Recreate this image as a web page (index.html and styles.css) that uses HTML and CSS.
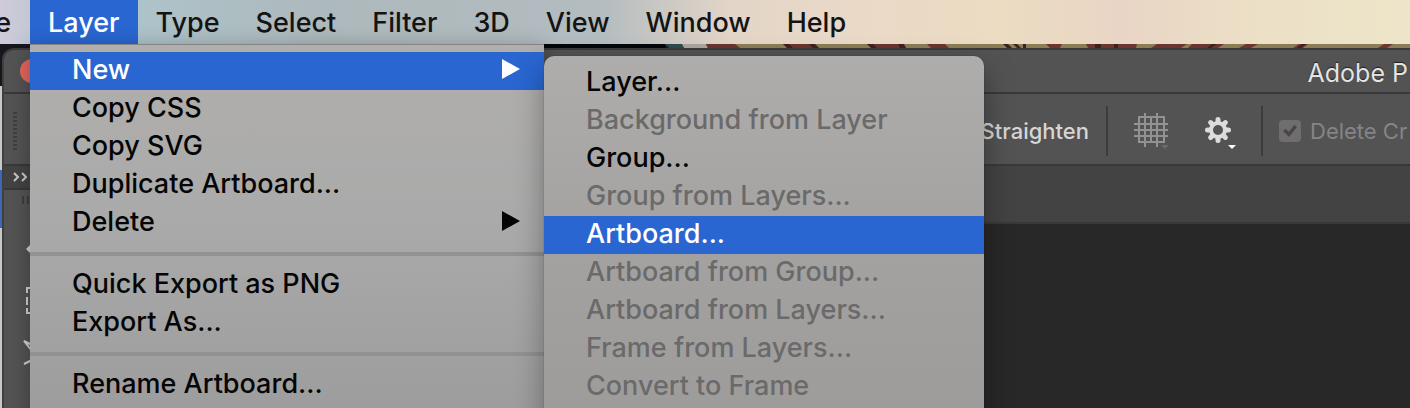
FILE: index.html
```
<!DOCTYPE html>
<html lang="en">
<head>
  <meta charset="UTF-8">
  <meta name="viewport" content="width=device-width, initial-scale=1.0">
  <title>Layer menu</title>
  <link rel="stylesheet" href="styles.css">
</head>
<body>

  <nav class="menubar">
    <button class="cut">e</button>
    <button class="active">Layer</button>
    <button>Type</button>
    <button>Select</button>
    <button>Filter</button>
    <button>3D</button>
    <button>View</button>
    <button>Window</button>
    <button>Help</button>
  </nav>

  <!-- wallpaper between menu bar and window -->
  <svg class="wallpaper" viewBox="0 0 1410 4" preserveAspectRatio="none" aria-hidden="true">
    <rect width="1410" height="4" fill="#15171c"/>
    <rect x="544" width="121" height="4" fill="#05080b"/>
    <path d="M665 0h20l-2 4h-14z" fill="#2f4a50"/>
    <path d="M682 0h24l2 4h-24z" fill="#aaa6a0"/>
    <path d="M706 0h704v4h-702z" fill="#8c7d55"/>
    <path d="M706 0h29l5 4h-32zM783 0h31l4 4h-28zM867 0h35l4 4h-33zM927 0h18l4 4h-18zM1046 0h16l-2 4h-10zM1086 0h51l-1 4h-48zM1157 0h30l-6 4h-30zM1192 0h32l-6 4h-30zM1246 0h12l-7 4h-12zM1299 0h9l-5 4h-10zM1384 0h9l-6 4h-9z" fill="#6c352f"/>
    <path d="M783 0h6l4 4h-6zM809 0h6l4 4h-6zM867 0h6l4 4h-6zM898 0h6l2 4h-6zM1003 0h5l4 4h-5zM1013 0h4l4 4h-4zM1023 0h3v4h-3zM1095 0h6v4h-6zM1114 0h4v4h-4zM1212 0h5l-6 4h-4zM1302 0h4l-5 4h-4z" fill="#3f2020"/>
  </svg>

  <div class="desktop">
    <div class="behind"><span></span></div>
    <main class="window">
      <header class="titlebar">
        <button class="close" aria-label="Close"></button>
        <h1>Adobe P</h1>
      </header>

      <div class="options">
        <span class="grip"></span>
        <button class="straighten">Straighten</button>
        <span class="divider"></span>
        <button class="icon" aria-label="Overlay options">
          <svg width="36" height="38" viewBox="0 0 36 38">
            <path d="M5 5h25v25H5zM0 12h34M0 18h34M0 24h34M11 1v34M17 5v25M23 1v34" fill="none" stroke="#929292" stroke-width="2"/>
            <path d="M27 33h8l-4 4z" fill="#6b6b6b"/>
          </svg>
        </button>
        <button class="icon gear" aria-label="Crop options">
          <svg width="32" height="34" viewBox="0 0 32 34">
            <g stroke="#dcdcdc" stroke-width="5" stroke-linecap="round">
              <path d="M13 2.500v21M2.500 13h21M5.600 5.600l14.800 14.800M20.400 5.600L5.600 20.400"/>
            </g>
            <circle cx="13" cy="13" r="9" fill="#dcdcdc"/>
            <circle cx="13" cy="13" r="5" fill="#535353"/>
            <path d="M23 28h8l-4 4z" fill="#fff"/>
          </svg>
        </button>
        <span class="divider"></span>
        <label class="check"><input type="checkbox" checked disabled><span>Delete Cr</span></label>
      </div>

      <div class="workspace">
        <aside class="tools">
          <div class="expand">
            <svg width="14" height="10" viewBox="0 0 14 10"><path d="M1 1l4 4-4 4M9 1l4 4-4 4" fill="none" stroke="#c8c8c8" stroke-width="2"/></svg>
          </div>
          <svg class="toolset" width="32" height="178" viewBox="0 0 32 178" fill="none" stroke="#d0d0d0" stroke-width="2">
            <path d="M19 6v8M24 6v8" stroke="#3c3c3c"/>
            <path d="M22 59l6-6v12z" fill="#d0d0d0" stroke="none"/>
            <path d="M30 98h-7v5M23 107v8M23 118v5h7"/>
            <path d="M28 161l-8-10 10 5M20 174l8-4"/>
          </svg>
        </aside>
        <section class="document">
          <div class="tabs"></div>
          <div class="canvas"></div>
        </section>
      </div>
    </main>
  </div>

  <ul class="menu main">
    <li><button class="active">New <svg width="18" height="20" viewBox="0 0 18 20"><path d="M0 0l18 10L0 20z"/></svg></button></li>
    <li><button>Copy CSS</button></li>
    <li><button>Copy SVG</button></li>
    <li><button>Duplicate Artboard...</button></li>
    <li><button>Delete <svg width="18" height="20" viewBox="0 0 18 20"><path d="M0 0l18 10L0 20z"/></svg></button></li>
    <li class="sep"></li>
    <li><button>Quick Export as PNG</button></li>
    <li><button>Export As...</button></li>
    <li class="sep"></li>
    <li><button>Rename Artboard...</button></li>
  </ul>

  <ul class="menu sub">
    <li><button>Layer...</button></li>
    <li><button disabled>Background from Layer</button></li>
    <li><button>Group...</button></li>
    <li><button disabled>Group from Layers...</button></li>
    <li><button class="active">Artboard...</button></li>
    <li><button disabled>Artboard from Group...</button></li>
    <li><button disabled>Artboard from Layers...</button></li>
    <li><button disabled>Frame from Layers...</button></li>
    <li><button disabled>Convert to Frame</button></li>
  </ul>

</body>
</html>
```
FILE: styles.css
```
* {
  margin: 0;
  padding: 0;
  box-sizing: border-box;
}

body {
  height: 100vh;
  display: flex;
  flex-direction: column;
  overflow: hidden;
  position: relative;
  background: #15171c;
  font-family: Inter, sans-serif;
}

button {
  border: none;
  background: none;
  font: inherit;
  color: inherit;
}

svg {
  display: block;
}

.menubar {
  display: flex;
  flex: none;
  height: 44px;
  font-size: 27px;
  font-weight: 450;
  color: #141414;
  background: linear-gradient(to right, #cfcbda 0, #c4c8d4 30px, #adc3ca 140px, #adb9bc 320px, #b3bcc0 600px, #e3d5c7 730px, #e9d9c7 850px, #ecdcc2 1000px, #e9d5c5 1120px, #ece0c6 1260px, #ede5c9 1400px);
}

.menubar button {
  padding: 0 18px;
}

.menubar .cut {
  width: 30px;
  padding: 0 19px 0 0;
  display: flex;
  align-items: center;
  justify-content: flex-end;
  overflow: hidden;
}

.menubar .active,
.menu .active {
  background: #2966d1;
  color: #fff;
}

.wallpaper {
  flex: none;
  width: 100%;
  height: 4px;
}

.desktop {
  flex: 1;
  display: flex;
  min-height: 0;
}

.behind {
  width: 2px;
  padding-top: 122px;
  background: linear-gradient(#15171c 38px, #c8c8c8 38px);
}

.behind span {
  display: block;
  height: 58px;
  background: #3b68b8;
}

.window {
  flex: 1;
  min-width: 0;
  display: flex;
  flex-direction: column;
  overflow: hidden;
  border-top: 2px solid #3a3a3a;
  border-left: 2px solid #3f3f3f;
  border-top-left-radius: 12px;
  background: #535353;
}

.titlebar {
  flex: none;
  display: flex;
  align-items: center;
  justify-content: space-between;
  height: 44px;
  padding: 4px 2px 0 16px;
  border-bottom: 2px solid #393939;
}

.close {
  width: 24px;
  height: 24px;
  margin-bottom: 4px;
  border-radius: 50%;
  background: #e3665b;
}

.titlebar h1 {
  font-size: 25px;
  font-weight: 400;
  color: #e4e4e4;
  text-shadow: 0 -1px 1px #222;
}

.options {
  flex: none;
  display: flex;
  align-items: center;
  height: 72px;
  padding-top: 4px;
  border-bottom: 2px solid #393939;
  font-size: 22px;
  font-weight: 450;
  color: #d6d6d6;
}

.grip {
  width: 4px;
  height: 38px;
  margin-left: 9px;
  margin-right: auto;
  background: repeating-linear-gradient(#3f3f3f 0 2px, transparent 2px 4px);
}

.divider {
  width: 2px;
  height: 50px;
  background: #3c3c3c;
}

.straighten {
  margin-right: 17px;
}

.icon {
  padding: 0 27px 0 26px;
}

.icon.gear {
  padding: 6px 24px 0 8px;
}

.check {
  display: flex;
  align-items: center;
  gap: 9px;
  width: 147px;
  padding-left: 16px;
  white-space: nowrap;
  font-weight: 400;
  color: #858585;
}

.check input {
  appearance: none;
  flex: none;
  width: 22px;
  height: 22px;
  border-radius: 4px;
  background: #706d6e;
  display: grid;
  place-items: center;
}

.check input::before {
  content: "";
  width: 14px;
  height: 12px;
  background: #474747;
  clip-path: polygon(0 50%, 20% 32%, 40% 58%, 80% 0, 100% 16%, 43% 100%);
}

.workspace {
  flex: 1;
  display: flex;
  min-height: 0;
}

.tools {
  width: 74px;
}

.expand {
  height: 24px;
  padding: 6px 9px;
  border-bottom: 2px solid #393939;
  background: #434343;
}

.document {
  flex: 1;
  display: flex;
  flex-direction: column;
}

.tabs {
  height: 58px;
  border-bottom: 2px solid #393939;
  background: #434343;
}

.canvas {
  flex: 1;
  background: #282828;
}

/* open menus */
.menu {
  position: absolute;
  list-style: none;
  padding: 8px 0 32px;
  font-size: 27px;
  font-weight: 450;
  color: #050505;
}

.menu button {
  display: flex;
  align-items: center;
  justify-content: space-between;
  width: 100%;
  height: 38px;
  padding: 0 24px 4px 42px;
  text-align: left;
  white-space: nowrap;
}

.menu svg {
  fill: currentColor;
}

.menu button:disabled {
  color: #6b6a6a;
}

.main {
  top: 44px;
  left: 30px;
  width: 514px;
  background: linear-gradient(#b0afad, #aaa 45%, #9b9b9b);
  box-shadow: inset 0 1px #858585, 0 4px 20px rgba(0,0,0,0.3);
}

.sub {
  top: 56px;
  left: 544px;
  width: 440px;
  border-radius: 10px;
  background: linear-gradient(#aeadac, #a4a2a1 50%, #9c9b9a);
  box-shadow: 0 0 1px rgba(0,0,0,0.6), 0 12px 30px rgba(0,0,0,0.35);
}

.sep {
  height: 4px;
  margin: 10px 0;
  background: #929292;
}
```
